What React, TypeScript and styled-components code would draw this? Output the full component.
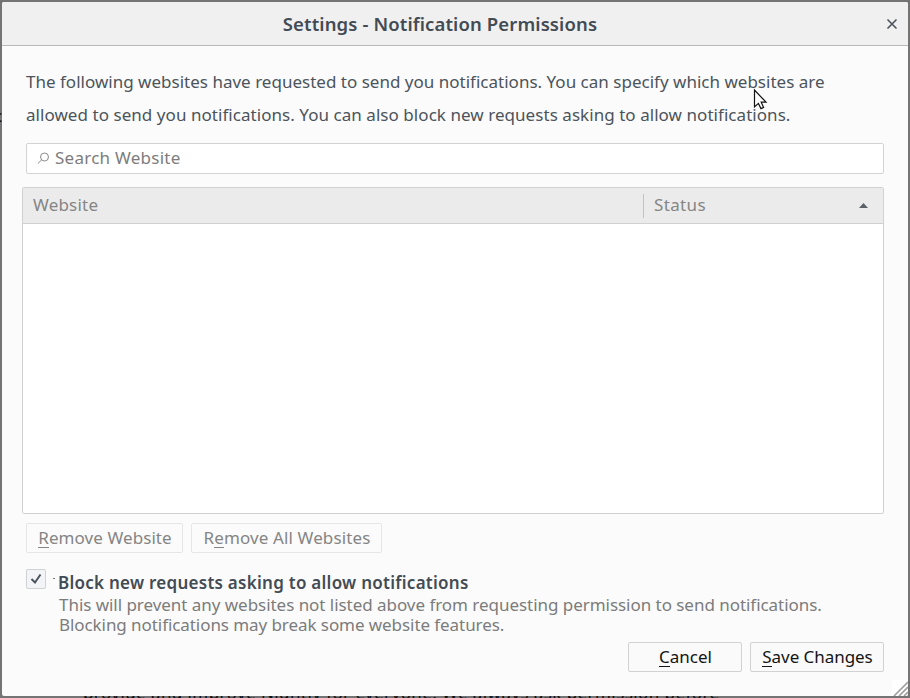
import React from "react";
import styled, { createGlobalStyle } from "styled-components";

const GlobalStyle = createGlobalStyle`
  * { box-sizing: border-box; }
  body { margin: 0; overflow: hidden; background: #747474; }
`;

const Backdrop = styled.div`
  position: relative;
  width: 910px;
  height: 698px;
  padding: 2px;
  overflow: hidden;
  background: #747474;
  font-family: "Noto Sans", "Open Sans", sans-serif;
  font-size: 17px;
  color: #4b545c;
`;

const PageText = styled.div<{ $left: number; $top: number }>`
  position: absolute;
  left: ${(p) => p.$left}px;
  top: ${(p) => p.$top}px;
  line-height: 24px;
  color: #0c0c0d;
  white-space: nowrap;
`;

const Dialog = styled.section`
  position: relative;
  display: flex;
  flex-direction: column;
  width: 906px;
  height: 694px;
  border-radius: 2px;
  overflow: hidden;
  background: #fbfbfb;
`;

const TitleBar = styled.header`
  display: grid;
  grid-template-columns: 32px 1fr 32px;
  align-items: center;
  height: 44px;
  border-bottom: 1px solid #b9b9b9;
  background: #f0f0f0;
`;

const Title = styled.h1`
  grid-column: 2;
  margin: 0 30px 0 0;
  text-align: center;
  font-size: 18.5px;
  font-weight: 600;
  line-height: 44px;
  letter-spacing: 0.12px;
  color: #434b54;
  white-space: nowrap;
`;

const CloseButton = styled.button`
  display: flex;
  align-items: center;
  justify-content: center;
  height: 32px;
  padding: 0;
  border: 0;
  background: none;
`;

const Content = styled.main`
  display: flex;
  flex-direction: column;
  flex: 1;
  padding: 19px 24px 24px;
`;

const Intro = styled.p`
  margin: 0;
  line-height: 33px;
  white-space: nowrap;
`;

const Line = styled.span<{ $tracking?: number }>`
  display: block;
  width: max-content;
  letter-spacing: ${(p) => p.$tracking ?? 0}px;
`;

const SearchBox = styled.div`
  display: flex;
  align-items: center;
  gap: 5px;
  height: 31px;
  margin-top: 12px;
  padding: 0 10px;
  border: 1px solid #d3d3d3;
  border-radius: 2px;
  background: #fff;
  color: #7d7d7d;

  ${Line} {
    padding-bottom: 2px;
  }
`;

const SiteTable = styled.div`
  height: 327px;
  margin: 13px 0 0 -4px;
  border: 1px solid #d1d1d1;
  border-radius: 2px;
  background: #fff;
`;

const TableHead = styled.div`
  display: grid;
  grid-template-columns: 620px 1fr;
  align-items: center;
  height: 36px;
  border-bottom: 1px solid #d1d1d1;
  background: #ebebeb;
  color: #858585;
`;

const HeadCell = styled.div<{ $divided?: boolean }>`
  display: flex;
  align-items: center;
  justify-content: space-between;
  height: 24px;
  padding: 0 15px 0 10px;
  border-left: ${(p) => (p.$divided ? "1px solid #c2c2c2" : "0")};

  ${Line} {
    padding-bottom: 2px;
  }
`;

const ButtonRow = styled.div<{ $end?: boolean }>`
  display: flex;
  gap: 8px;
  justify-content: ${(p) => (p.$end ? "flex-end" : "flex-start")};
  margin-top: ${(p) => (p.$end ? 7 : 9)}px;
`;

const Button = styled.button<{ $width: number; $muted?: boolean; $tracking?: number }>`
  width: ${(p) => p.$width}px;
  height: 30px;
  padding: 0 0 0 1px;
  border: 1px solid ${(p) => (p.$muted ? "#e6e6e6" : "#d2d2d2")};
  border-radius: 2px;
  background: ${(p) => (p.$muted ? "#fbfbfb" : "#fafafa")};
  color: ${(p) => (p.$muted ? "#858585" : "#141414")};
  font: inherit;
  line-height: 28px;
  letter-spacing: ${(p) => p.$tracking ?? 0}px;
  white-space: nowrap;
`;

const AccessKey = styled.span`
  background: linear-gradient(currentColor, currentColor) 0 21px / 100% 1px no-repeat;
`;

const BlockOption = styled.div`
  display: flex;
  align-items: flex-start;
  gap: 6px;
  height: 66px;
  margin-top: 16px;
`;

const CheckBox = styled.div`
  display: flex;
  align-items: center;
  justify-content: center;
  width: 20px;
  height: 20px;
  border: 1px solid #d0d1d4;
  border-radius: 2px;
  background: #f3f4f7;
`;

const FocusSpeck = styled.i`
  width: 2px;
  height: 1px;
  margin: 9px -4px 0 1px;
  background: #777;
`;

const OptionText = styled.div`
  padding: 4px 0 0 2px;
  line-height: 20px;
  color: #7c7c7c;
  white-space: nowrap;
`;

const OptionLabel = styled.strong`
  display: block;
  margin: 0 0 2px -1px;
  font-weight: 600;
  color: #434b54;
`;

const ResizeGrip = styled.svg`
  position: absolute;
  right: 0;
  bottom: 0;
`;

const Pointer = styled.svg`
  position: absolute;
  left: 753px;
  top: 88px;
`;

export default function App() {
  return (
    <>
      <GlobalStyle />
      <Backdrop>
        <PageText $left={-6} $top={104}>c</PageText>
        <PageText $left={83} $top={681}>
          <Line $tracking={0.42}>provide and improve Nightly for everyone. We always ask permission before</Line>
        </PageText>
        <Dialog>
          <TitleBar>
            <Title>Settings - Notification Permissions</Title>
            <CloseButton aria-label="Close">
              <svg width="12" height="12" viewBox="0 0 12 12" stroke="#4b545c" strokeWidth="1.6">
                <path d="M1.5 1.5 10.5 10.5M10.5 1.5 1.5 10.5" />
              </svg>
            </CloseButton>
          </TitleBar>
          <Content>
            <Intro>
              <Line $tracking={0.01}>The following websites have requested to send you notifications. You can specify which websites are</Line>
              <Line $tracking={0.05}>allowed to send you notifications. You can also block new requests asking to allow notifications.</Line>
            </Intro>
            <SearchBox>
              <svg width="13" height="13" viewBox="0 0 13 13" fill="none" stroke="#8a8a8a">
                <circle cx="7.5" cy="5" r="4" />
                <path d="M4.6 7.9.8 11.6" />
              </svg>
              <Line $tracking={0.25}>Search Website</Line>
            </SearchBox>
            <SiteTable>
              <TableHead>
                <HeadCell><Line $tracking={0.2}>Website</Line></HeadCell>
                <HeadCell $divided>
                  <Line $tracking={0.35}>Status</Line>
                  <svg width="9" height="5" viewBox="0 0 9 5"><path d="M0 5 4.5 0 9 5Z" fill="#5d6268" /></svg>
                </HeadCell>
              </TableHead>
            </SiteTable>
            <ButtonRow>
              <Button $width={157} $muted $tracking={0.08}><AccessKey>R</AccessKey>emove Website</Button>
              <Button $width={191} $muted $tracking={0.12}>R<AccessKey>e</AccessKey>move All Websites</Button>
            </ButtonRow>
            <BlockOption>
              <CheckBox>
                <svg width="12" height="12" viewBox="0 0 12 12" fill="none" stroke="#4b545c" strokeWidth="2">
                  <path d="M1.5 6 5 9.5 10.5 1.5" />
                </svg>
              </CheckBox>
              <FocusSpeck />
              <OptionText>
                <OptionLabel><Line $tracking={0.26}>Block new requests asking to allow notifications</Line></OptionLabel>
                <Line $tracking={-0.04}>This will prevent any websites not listed above from requesting permission to send notifications.</Line>
                <Line $tracking={-0.07}>Blocking notifications may break some website features.</Line>
              </OptionText>
            </BlockOption>
            <ButtonRow $end>
              <Button $width={114}><AccessKey>C</AccessKey>ancel</Button>
              <Button $width={134} $tracking={-0.05}><AccessKey>S</AccessKey>ave Changes</Button>
            </ButtonRow>
          </Content>
          <ResizeGrip width="16" height="16" viewBox="0 0 16 16">
            <path d="M0 0H16V16H0Z" fill="#fff" />
            <path d="M2 16 16 2M7 16 16 7M12 16 16 12" stroke="#a0a0a0" strokeWidth="1.7" />
          </ResizeGrip>
        </Dialog>
        <Pointer width="15" height="22" viewBox="0 0 15 22">
          <path d="M1.5 2V19L5.4 15.4 8 20.6 10.6 19.4 8.2 14.2H13Z" fill="#fff" stroke="#111" strokeWidth="1.2" />
        </Pointer>
      </Backdrop>
    </>
  );
}
